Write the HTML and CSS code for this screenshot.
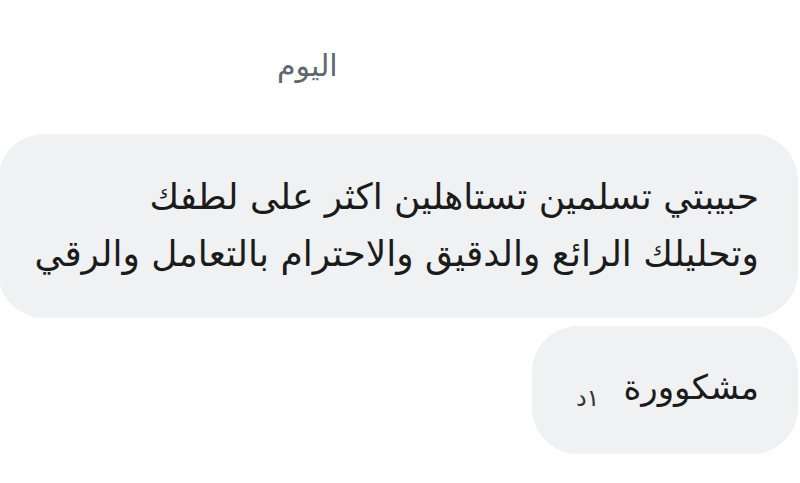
FILE: index.html
```html
<!DOCTYPE html>
<html lang="ar" dir="rtl">
<head>
    <meta charset="UTF-8">
    <meta name="viewport" content="width=device-width, initial-scale=1.0">
    <title>محادثة</title>
    <link rel="stylesheet" href="styles.css">
</head>
<body>
    <div class="chat">
        <!-- فاصل التاريخ -->
        <div class="day-label">اليوم</div>

        <div class="messages">
            <div class="bubble bubble-wide">
                <p class="text">حبيبتي تسلمين تستاهلين اكثر على لطفك<br>وتحليلك الرائع والدقيق والاحترام بالتعامل والرقي</p>
            </div>
            <div class="bubble bubble-short">
                <p class="text">مشكوورة</p>
                <span class="time">١د</span>
            </div>
        </div>
    </div>
</body>
</html>
```

FILE: styles.css
```css
body {
    font-family: "DejaVu Sans", "Noto Sans", sans-serif;
    background-color: #ffffff;
    color: #1b1b1b;
    margin: 0;
    padding: 0;
    overflow: hidden;
}

.chat {
    width: 800px;
    height: 483px;
}

/* فاصل اليوم */
.day-label {
    font-size: 30px;
    color: #5f6771;
    text-align: left;
    padding: 48px 0 0 277px;
    height: 48px;
}

.messages {
    display: flex;
    flex-direction: column;
    align-items: flex-start;
    gap: 8px;
    margin-top: 38px;
}

.bubble {
    background-color: #eff1f3;
    border-radius: 46px;
    margin-right: 2px;
}

.bubble-wide {
    margin-left: -40px;
    width: 800px;
    height: 184px;
    box-sizing: border-box;
    padding: 34px 39px 0 0;
}

.bubble-short {
    display: flex;
    align-items: center;
    gap: 24px;
    width: 266px;
    height: 128px;
    box-sizing: border-box;
    padding: 0 39px 0 0;
}

.text {
    margin: 0;
    font-size: 36px;
    line-height: 57px;
}

.bubble-short .text {
    font-size: 34px;
    margin-top: -6px;
}

.time {
    font-size: 24px;
    color: #333;
    margin-top: 16px;
}
```
